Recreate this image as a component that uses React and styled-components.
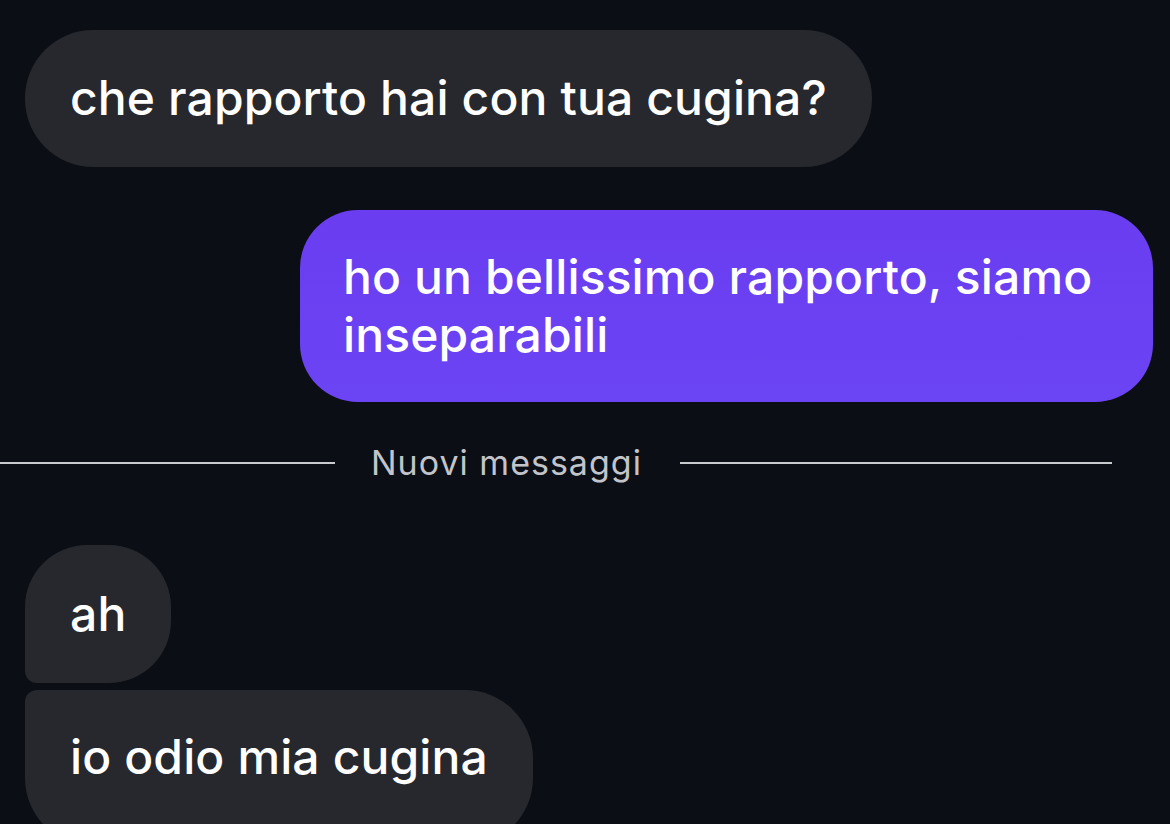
import React from "react";
import styled, { createGlobalStyle } from "styled-components";

const Global = createGlobalStyle`
  html, body { margin: 0; padding: 0; background: #0b0e14; }
  body { overflow: hidden; }
  * { box-sizing: border-box; }
`;

const Screen = styled.div`
  width: 1170px;
  height: 824px;
  overflow: hidden;
  background: #0b0e14;
  font-family: Inter, "Noto Sans", sans-serif;
  color: #ffffff;
  display: flex;
  flex-direction: column;
  padding: 30px 17px 0 25px;
`;

const Row = styled.div`
  display: flex;
  justify-content: ${(p) => (p.$mine ? "flex-end" : "flex-start")};
  margin-top: ${(p) => p.$gap || 0}px;
`;

const Bubble = styled.div`
  font-size: 48px;
  font-weight: 500;
  line-height: 58px;
  letter-spacing: 0.12px;
  white-space: ${(p) => (p.$mine ? "normal" : "nowrap")};
  padding: ${(p) => p.$pad || "39px 45px 40px 45px"};
  background: ${(p) =>
    p.$mine ? "linear-gradient(180deg, #6a3df0 0%, #6b44f4 100%)" : "#26282d"};
  border-radius: ${(p) => p.$radius || "68px"};
  width: ${(p) => p.$width || "auto"};
  flex-shrink: 0;
`;

const Divider = styled.div`
  display: flex;
  align-items: center;
  margin: 38px 0 0 -25px;
  height: 46px;
`;

const Line = styled.div`
  height: 2px;
  width: ${(p) => p.$w}px;
  background: #c9cace;
  flex-shrink: 0;
`;

const DividerText = styled.span`
  font-size: 34px;
  font-weight: 400;
  letter-spacing: 1px;
  color: #c2c4ca;
  margin: 0 38px 0 36px;
  white-space: nowrap;
  line-height: 46px;
`;

export default function App() {
  return (
    <>
      <Global />
      <Screen>
        <Row>
          <Bubble>che rapporto hai con tua cugina?</Bubble>
        </Row>
        <Row $mine $gap={43}>
          <Bubble $mine $width="853px" $pad="38px 43px 38px 43px" $radius="58px">
            ho un bellissimo rapporto, siamo inseparabili
          </Bubble>
        </Row>
        <Divider>
          <Line $w={335} />
          <DividerText>Nuovi messaggi</DividerText>
          <Line $w={432} />
        </Divider>
        <Row $gap={59}>
          <Bubble $pad="40px 45px 40px 45px" $radius="62px 62px 62px 12px">
            ah
          </Bubble>
        </Row>
        <Row $gap={7}>
          <Bubble $pad="38px 45px 60px 45px" $radius="12px 68px 68px 68px">
            io odio mia cugina
          </Bubble>
        </Row>
      </Screen>
    </>
  );
}
